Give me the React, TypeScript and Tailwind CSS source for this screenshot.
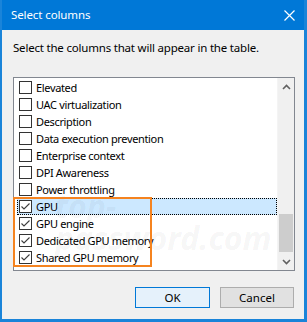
import { useState } from "react";

const COLUMNS = [
  { label: "Elevated", checked: false },
  { label: "UAC virtualization", checked: false },
  { label: "Description", checked: false },
  { label: "Data execution prevention", checked: false },
  { label: "Enterprise context", checked: false },
  { label: "DPI Awareness", checked: false },
  { label: "Power throttling", checked: false },
  { label: "GPU", checked: true },
  { label: "GPU engine", checked: true },
  { label: "Dedicated GPU memory", checked: true },
  { label: "Shared GPU memory", checked: true },
];

const CheckBox = ({ checked }: { checked: boolean }) => (
  <span className="flex h-[13px] w-[13px] shrink-0 items-center justify-center border border-[#333333] bg-white">
    {checked && (
      <svg width="11" height="11" viewBox="0 0 11 11">
        <polyline points="1.5,5.5 4,8 9.5,2.5" fill="none" stroke="#3c3c3c" strokeWidth="1.1" />
      </svg>
    )}
  </span>
);

export default function App() {
  const [items, setItems] = useState(COLUMNS);
  const selected = 7;

  const toggle = (index: number) => {
    setItems((prev) => prev.map((item, i) => (i === index ? { ...item, checked: !item.checked } : item)));
  };

  return (
    <div className="flex h-[322px] w-[307px] flex-col border-b-[3px] border-l-2 border-r-[3px] border-[#1a84d9] font-['Noto_Sans',sans-serif] text-[11.5px] text-black">
      <div className="flex h-[30px] shrink-0 items-center justify-between bg-[#0078d7] pl-[9px] pr-[9px] text-white">
        <span className="leading-[16px] tracking-[-0.1px]">Select columns</span>
        <svg width="11" height="11" viewBox="0 0 11 11">
          <path d="M0.5 0.5 L10.5 10.5 M10.5 0.5 L0.5 10.5" stroke="#ffffff" strokeWidth="1.2" />
        </svg>
      </div>

      <div className="flex flex-1 flex-col bg-[#f0f0f0] pl-[11px] pr-[9px]">
        <p className="mt-[10px] leading-[16px] tracking-[-0.2px]">Select the columns that will appear in the table.</p>

        <div className="relative mt-[21px] flex h-[194px] w-[282px] border border-[#828790] bg-white">
          <ul className="flex-1 pl-[3px] pt-[1px] text-[11px] tracking-[-0.35px]">
            {items.map((item, index) => (
              <li
                key={item.label}
                onClick={() => toggle(index)}
                className={
                  index === selected
                    ? "flex h-[17px] items-center gap-[4px] border border-dotted border-black bg-[#cce8ff] pl-[1px]"
                    : "flex h-[17px] items-center gap-[4px] pl-[2px]"
                }
              >
                <CheckBox checked={item.checked} />
                <span className="leading-[17px]">{item.label}</span>
              </li>
            ))}
          </ul>

          <div className="flex w-[17px] flex-col border-l border-[#f4f4f4] bg-[#f0f0f0]">
            <div className="flex h-[17px] items-center justify-center">
              <svg width="9" height="6" viewBox="0 0 9 6">
                <path d="M1 5 L4.5 1.5 L8 5" fill="none" stroke="#606060" strokeWidth="1.6" />
              </svg>
            </div>
            <div className="flex flex-1 flex-col justify-end">
              <div className="mx-[1px] mb-[1px] h-[38px] bg-[#cdcdcd]" />
            </div>
            <div className="flex h-[17px] items-center justify-center">
              <svg width="9" height="6" viewBox="0 0 9 6">
                <path d="M1 1 L4.5 4.5 L8 1" fill="none" stroke="#606060" strokeWidth="1.6" />
              </svg>
            </div>
          </div>

          <span className="pointer-events-none absolute left-[41px] top-[112px] text-[32px] font-bold italic leading-[32px] text-black/[0.05]">
            top-password.com
          </span>
          <div className="pointer-events-none absolute left-[-1px] top-[119px] h-[70px] w-[139px] border-2 border-[#f5831f]" />
        </div>

        <div className="mt-[16px] flex justify-end gap-[10px] pr-[1px]">
          <button className="h-[21px] w-[75px] border border-[#0078d7] bg-[#e5f1fb] leading-[19px]">OK</button>
          <button className="h-[21px] w-[74px] border border-[#adadad] bg-[#e1e1e1] leading-[19px]">Cancel</button>
        </div>
      </div>
    </div>
  );
}
